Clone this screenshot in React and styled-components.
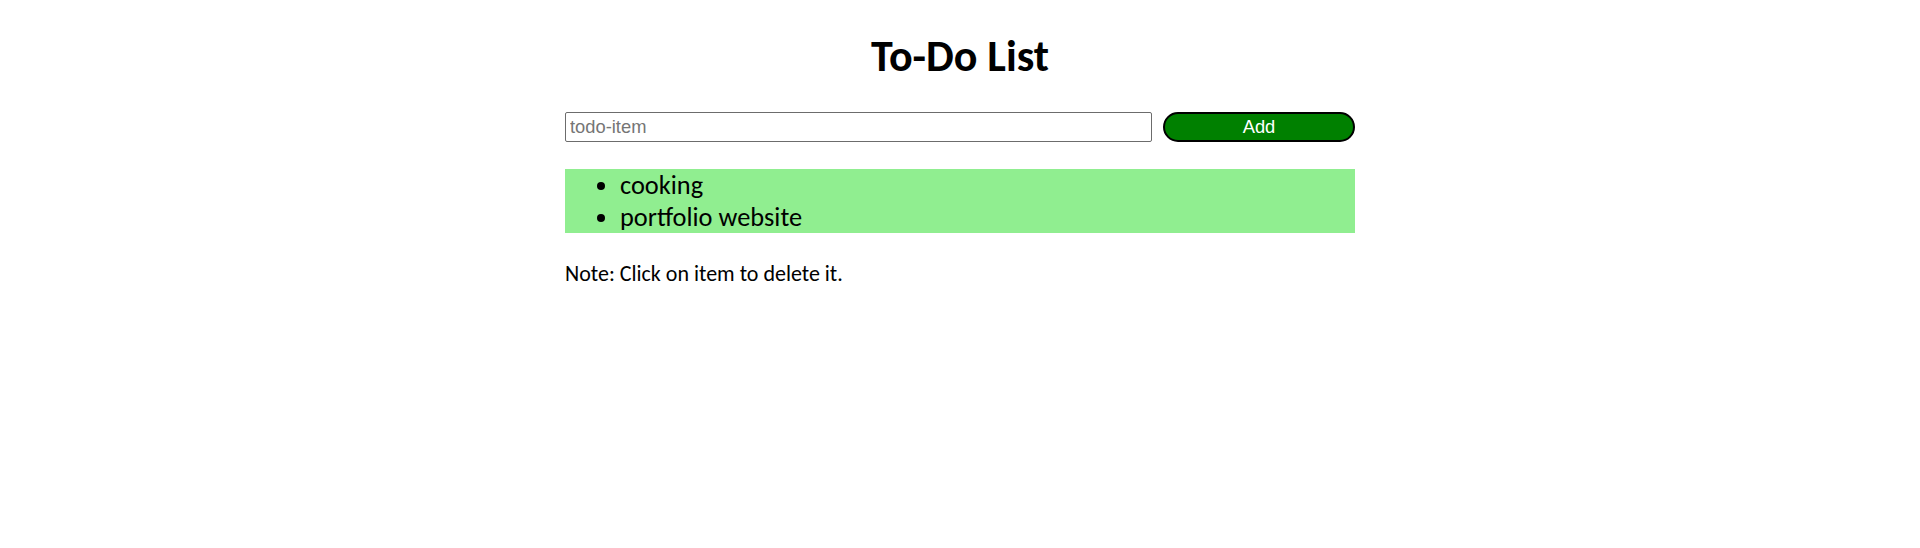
import React, { useState } from "react";
import styled, { createGlobalStyle } from "styled-components";

const GlobalStyle = createGlobalStyle`
  body {
    margin: 0;
    background: #fff;
    color: #000;
    font-family: Calibri, Carlito, Lato, sans-serif;
  }
`;

const Page = styled.main`
  width: 790px;
  margin: 0 auto;
  padding-top: 29px;
`;

const Title = styled.h1`
  margin: 0 0 29px;
  font-size: 44px;
  line-height: 54px;
  font-weight: 700;
  text-align: center;
`;

const Form = styled.form`
  display: flex;
  gap: 11px;
  height: 30px;
`;

const Input = styled.input`
  box-sizing: border-box;
  flex: 1;
  min-width: 0;
  padding: 1px 4px;
  border: 1px solid #6c6c6c;
  border-radius: 2px;
  font: 18.33px "Liberation Sans", Arial, sans-serif;

  &::placeholder {
    color: #757575;
  }
`;

const AddButton = styled.button`
  box-sizing: border-box;
  width: 192px;
  padding: 0;
  border: 2px solid #000;
  border-radius: 15px;
  background: green;
  color: #fff;
  font: 18.33px "Liberation Sans", Arial, sans-serif;
`;

const List = styled.ul`
  margin: 27px 0;
  padding: 0 0 0 55px;
  background: lightgreen;
`;

const Item = styled.li`
  font-size: 26.4px;
  line-height: 32px;
  cursor: pointer;
`;

const Note = styled.p`
  margin: 0;
  font-size: 22px;
  line-height: 27px;
`;

export default function App() {
  const [items, setItems] = useState(["cooking", "portfolio website"]);
  const [text, setText] = useState("");

  const add = (event) => {
    event.preventDefault();
    if (!text.trim()) return;
    setItems([...items, text.trim()]);
    setText("");
  };

  return (
    <Page>
      <GlobalStyle />
      <Title>To-Do List</Title>
      <Form onSubmit={add}>
        <Input
          placeholder="todo-item"
          value={text}
          onChange={(event) => setText(event.target.value)}
        />
        <AddButton type="submit">Add</AddButton>
      </Form>
      <List>
        {items.map((item, index) => (
          <Item
            key={index}
            onClick={() => setItems(items.filter((_, i) => i !== index))}
          >
            {item}
          </Item>
        ))}
      </List>
      <Note>Note: Click on item to delete it.</Note>
    </Page>
  );
}
